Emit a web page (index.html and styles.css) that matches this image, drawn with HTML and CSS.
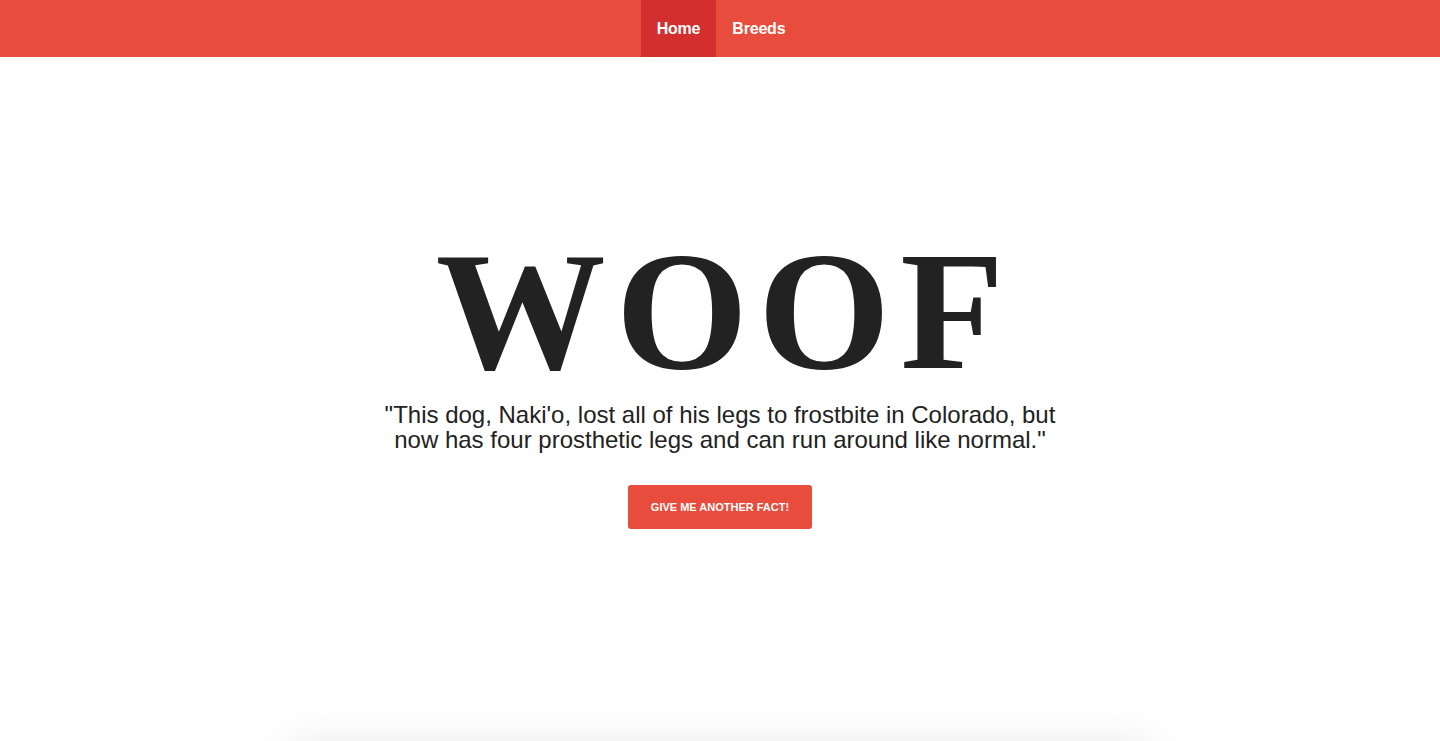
FILE: index.html
```html
<!DOCTYPE html>
<html lang="en">
<head>
<meta charset="utf-8">
<title>Woof</title>
<link rel="stylesheet" href="styles.css">
</head>
<body>
<nav class="navbar">
  <ul class="nav-list">
    <li><a class="nav-link active" href="#">Home</a></li>
    <li><a class="nav-link" href="#">Breeds</a></li>
  </ul>
</nav>
<main class="hero">
  <h1 class="title">WOOF</h1>
  <p class="fact">"This dog, Naki'o, lost all of his legs to frostbite in Colorado, but now has four prosthetic legs and can run around like normal."</p>
  <button class="btn">Give me another fact!</button>
</main>
<section class="card"></section>
</body>
</html>
```
FILE: styles.css
```css
html, body {
  margin: 0;
  padding: 0;
  background: #fff;
  font-family: "Liberation Sans", Arial, sans-serif;
  color: #222;
}
body {
  overflow: hidden;
  height: 741px;
}
.navbar {
  background: #e74c3c;
  height: 57px;
  display: flex;
  justify-content: center;
  padding-left: 2px;
}
.nav-list {
  list-style: none;
  margin: 0;
  padding: 0;
  display: flex;
}
.nav-link {
  display: flex;
  align-items: center;
  height: 57px;
  padding: 0 16px;
  color: #fff;
  text-decoration: none;
  font-size: 16px;
  font-weight: bold;
  letter-spacing: -0.2px;
}
.nav-link.active {
  background: #d32f2f;
}
.hero {
  box-sizing: border-box;
  display: flex;
  flex-direction: column;
  align-items: center;
  padding-top: 179px;
  height: 698px;
}
.title {
  margin: 0;
  padding-left: 10px;
  font-family: "Liberation Serif", "Times New Roman", serif;
  font-weight: bold;
  font-size: 170px;
  line-height: 150px;
  letter-spacing: 10px;
  color: #222;
}
.fact {
  margin: 16px 0 0;
  max-width: 690px;
  text-align: center;
  font-size: 24px;
  line-height: 25px;
  color: #222;
}
.btn {
  margin-top: 33px;
  width: 184px;
  height: 44px;
  border: none;
  border-radius: 3px;
  background: #e74c3c;
  color: #fff;
  font-family: "Liberation Sans", Arial, sans-serif;
  font-weight: bold;
  font-size: 11px;
  text-transform: uppercase;
  cursor: pointer;
}
.card {
  width: 860px;
  height: 200px;
  margin: 0 auto;
  background: #fff;
  box-shadow: 0 0 50px rgba(0, 0, 0, 0.15);
}
```
